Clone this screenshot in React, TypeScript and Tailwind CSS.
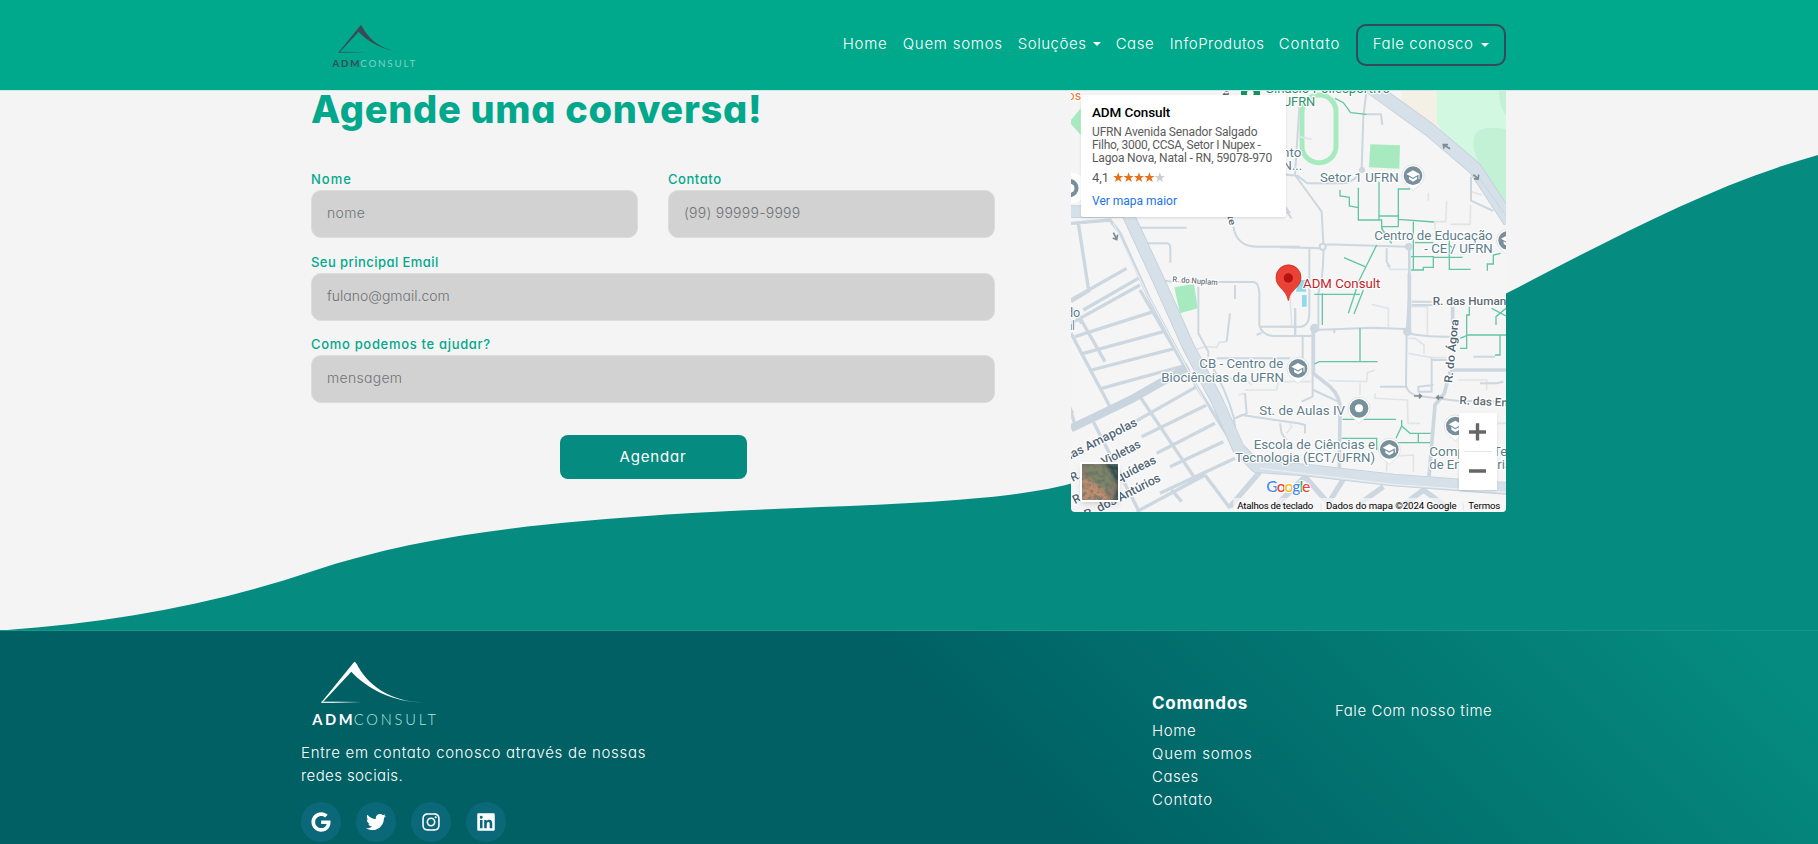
import React from "react";
import { FaGoogle, FaTwitter, FaInstagram, FaLinkedin } from "react-icons/fa";

function Logo({ className, strong, soft, id }: { className: string; strong: string; soft: string; id: string }) {
  return (
    <svg viewBox="90 90 380 200" className={className} aria-label="ADM Consult">
      <defs>
        <linearGradient id={id} gradientUnits="userSpaceOnUse" x1="124" x2="245" y1="0" y2="0">
          <stop offset="0.3" stopColor={strong} />
          <stop offset="1" stopColor={strong} stopOpacity="0" />
        </linearGradient>
        <linearGradient id={id + "t"} gradientUnits="userSpaceOnUse" x1="360" x2="435" y1="0" y2="0">
          <stop offset="0" stopColor={strong} />
          <stop offset="1" stopColor={strong} stopOpacity="0.1" />
        </linearGradient>
      </defs>
      <path d="M123 218L220 99Q225 92 230 102C262 162 325 216 434 217C340 218 258 174 214 125L132 213Z" fill={`url(#${id}t)`} />
      <rect x="124" y="215" width="120" height="3.5" fill={`url(#${id})`} />
      <text x="97" y="285" fontSize="44" fontWeight="700" fill={strong} textLength="121" fontFamily="Lato, sans-serif">ADM</text>
      <text x="221" y="285" fontSize="44" fill={soft} textLength="247" fontFamily="Lato, sans-serif">CONSULT</text>
    </svg>
  );
}

function Caret() {
  return <span className="block h-0 w-0 border-x-4 border-t-4 border-x-transparent border-t-white" />;
}

function Pin({ x, y, dot }: { x: number; y: number; dot?: boolean }) {
  return (
    <g transform={`translate(${x} ${y})`}>
      <path d="M0 46C-8 34 -33 25 -33 0A33 33 0 0 1 33 0C33 25 8 34 0 46Z" fill="#fff" stroke="#d5dade" strokeWidth="2" />
      <circle r="28" fill="#78909c" />
      {dot ? (
        <circle r="12" fill="#fff" />
      ) : (
        <g>
          <path d="M-20 -5L0 -16L20 -5L0 6Z" fill="#fff" />
          <path d="M-12 3V11L0 18L12 11V3L0 10Z" fill="#fff" />
          <path d="M18 -5V10" stroke="#fff" strokeWidth="3" />
        </g>
      )}
    </g>
  );
}

type LabelProps = { x: number; y: number; w: number; children: string; size?: number; fill?: string; weight?: number; rotate?: number };

function MapLabel({ x, y, w, children, size = 40, fill = "#607d8b", weight = 400, rotate = 0 }: LabelProps) {
  return (
    <text
      transform={`translate(${x} ${y}) rotate(${rotate})`}
      fontSize={size}
      fontWeight={weight}
      fill={fill}
      stroke="#fff"
      strokeWidth="7"
      strokeLinejoin="round"
      paintOrder="stroke"
      textLength={w}
      lengthAdjust="spacingAndGlyphs"
      fontFamily="Roboto, sans-serif"
    >
      {children}
    </text>
  );
}

function MapDrawing() {
  return (
    <svg viewBox="33 33 1305 1263" className="block h-[421px] w-[435px]" fill="none">
      <rect x="33" y="30" width="1305" height="1266" fill="#f5f5f5" />
      <path d="M33 120L62 85V165L33 132Z" fill="#a8eac0" />
      <g transform="translate(660 0)">
        <path d="M365 30H475V170L365 80Z" fill="#f5f0e5" />
        <path d="M470 30H678V385L590 260L490 165L470 125Z" fill="#d3f8e2" />
        <path d="M655 30H678V105Q655 80 658 30Z" fill="#c3f1d5" />
        <path d="M678 148Q610 135 587 160Q572 190 590 235L678 370Z" fill="#c3f1d5" />
        <rect x="66" y="45" width="102" height="203" rx="50" stroke="#a8eac0" strokeWidth="15" />
        <path d="M271 193L360 196L358 266L267 262Z" fill="#a8eac0" />
        <path d="M55 600H78V635H48ZM66 645H80V680H66Z" fill="#90daee" />
      </g>
      <path d="M343 622L402 612L413 685L360 700Z" fill="#a8eac0" />

      <g stroke="#e1e4e6" strokeWidth="5">
        <path transform="translate(660 0)" d="M55 170L95 178M445 338V362M500 362L497 425H465V455M575 335L605 345M572 375L570 433H512M322 555L330 568H388M0 562H45L50 570V590" />
        <path transform="translate(660 630)" d="M30 20L35 105M275 43L325 55V112M385 50H442V138M385 145H405L432 165V192M385 190L455 203H498M145 272L260 275L262 248L285 240M240 280V315M285 310V325L382 330L384 400H420M320 545V500L400 495V545M0 275H95M535 270H620V300M655 30H678M600 400H678" />
        <path transform="translate(0 630)" d="M405 180L435 170L470 172L478 157L500 155M505 265H555L575 285M555 300H650L655 275M535 315L555 310M690 400L695 410L680 430" />
      </g>

      <g stroke="#ccd7e0" strokeWidth="6" strokeLinejoin="round">
        <path d="M215 443H380M240 490H320Q331 490 331 505V548M520 440Q530 500 590 500H720M300 600L340 606H580Q597 608 598 640V735Q605 765 640 768H745M415 620V760L445 815V830M525 615V657M510 700L500 785M690 400L668 370" />
        <path d="M600 740H710M706 685V765M470 835H690M590 765L605 758" />
        <g transform="translate(660 0)">
          <path d="M60 50L45 285L125 395L130 490Q132 590 115 640V740M45 285Q10 290 -30 260M50 285L82 310H190Q230 305 245 265L250 110L260 30M260 103H303L307 135M88 505V690Q90 740 60 740H0M0 502L125 505M130 493L388 500M320 505V545L330 562M573 290V362L640 393M20 395L35 415" />
          <path d="M388 490V590" strokeWidth="8" />
        </g>
        <g transform="translate(660 630)">
          <path d="M388 0L380 125L378 285Q380 310 415 318L530 332L678 335M100 120L280 113L375 117M385 130Q430 142 535 140M395 45H480M395 35H455M45 55V135M0 138H95M68 140V220M98 110V320L65 335M100 300L175 335M163 120V130M300 290H378M455 205V305H415V290L460 285M458 210H500M580 200H645M600 280H650L670 275" />
          <path d="M388 -50V120M100 110V250L150 290Q182 320 180 360L178 545M518 50V110M510 245L493 310L465 345L447 560M510 240H678" strokeWidth="11" />
        </g>
        <path transform="translate(0 630)" d="M442 205Q500 300 522 385L525 415M525 385L545 375L715 400L735 405V430M555 310L560 370L525 385M660 400L665 430L680 450M40 370L20 330" />
      </g>
      <g fill="#ccd7e0">
        <circle cx="788" cy="500" r="12" />
        <circle cx="764" cy="745" r="14" />
        <circle cx="1042" cy="755" r="13" />
        <circle cx="1046" cy="500" r="11" />
        <circle cx="906" cy="270" r="9" />
      </g>
      <circle cx="788" cy="500" r="6" fill="#f5f5f5" />

      <g stroke="#ccd7e0" strokeWidth="10">
        <path d="M33 430L150 420L180 460L270 660L410 920M55 430L85 625M33 660L200 565M70 690L235 595" />
        <g transform="translate(0 630)">
          <path d="M240 0L380 240M33 100L240 -15M33 35L90 0M45 140L280 65M70 190L310 125M95 240L345 175M125 295L380 225M33 130L150 350M55 75L135 215M33 50L65 100M33 365L45 405" />
          <path d="M240 320L405 565M100 395L240 670M225 395L410 290M245 440L440 345M290 490L465 400M330 530L490 455M300 610L525 505M435 555L510 655M335 600L365 635M230 665L435 555M410 290L530 480" />
        </g>
        <g transform="translate(660 630)">
          <path d="M-150 650L-60 545M-15 650L75 560L145 640L195 560M240 640L310 590M370 645L430 600L500 650" strokeWidth="16" />
        </g>
      </g>
      <g strokeLinejoin="round">
        <path d="M33 1045L220 955L385 860" stroke="#c8d4de" strokeWidth="24" />
        <path d="M33 395H200L300 610L385 800L470 960L535 1105L590 1160L735 1170L1000 1200L1340 1225" stroke="#c4d0da" strokeWidth="38" />
        <path d="M33 395H200L300 610L385 800L470 960L535 1105L590 1160L735 1170L1000 1200L1340 1225" stroke="#d6e0e8" strokeWidth="33" />
        <path d="M160 430L260 640L400 900L510 1110" stroke="#f0f3f5" strokeWidth="3" />
        <path d="M600 1165L1000 1213L1340 1237" stroke="#eef1f4" strokeWidth="3" />
        <path d="M930 20L1110 150L1245 265L1350 425" stroke="#c4d0da" strokeWidth="42" />
        <path d="M930 20L1110 150L1245 265L1350 425" stroke="#d6e0e8" strokeWidth="37" />
        <path d="M1255 290L1340 410" stroke="#c4ced6" strokeWidth="2" />
      </g>

      <g stroke="#63c5a4" strokeWidth="4">
        <path transform="translate(660 0)" d="M165 55L190 68L212 98L260 103M180 330V348L208 352V378L235 383M235 323V420H305V445L335 490M297 305V418M297 408H355M355 440V327H390M355 418L462 426M305 440H355M400 425V570M393 570H430V562H460V530H393M460 488H405M508 480V568H572M460 532H548M290 495L238 600L205 700M192 533L255 560M250 630L222 702M127 640V735M103 643H240M305 440L312 470M622 572V552H640V525L662 520M500 490L520 505" />
        <path transform="translate(660 630)" d="M240 115V213M103 222L118 215H293M568 50V75H560V175H540M540 145L565 135H678M660 135V195H645M648 105V80L678 55M635 55L678 78M188 388H348M365 390V408L348 445M365 408L390 430H452M415 430V458M345 458H450M185 445H290V480" />
      </g>

      <g stroke="#7d8b94" strokeWidth="5">
        <path d="M160 458L170 477M173 464L170 479L158 474M1150 194L1170 206M1152 206L1150 194L1164 194M1240 284L1254 296M1256 284L1254 298L1242 296M1062 948H1082M1077 942L1084 948L1077 955M1130 953H1150M1137 946L1130 952L1137 959" />
      </g>

      <circle cx="33" cy="324" r="46" fill="#fff" />
      <path d="M33 297A28 28 0 0 1 33 352V338A14 14 0 0 0 33 311Z" fill="#78909c" />
      <rect x="543" y="20" width="57" height="27" fill="#15935f" />
      <circle cx="571" cy="40" r="10" fill="#fff" />

      <MapLabel x={2} y={60} w={61} fill="#e8772e">dos</MapLabel>
      <MapLabel x={615} y={38} w={375} fill="#2f8f6b">Ginásio Poliesportivo</MapLabel>
      <MapLabel x={668} y={78} w={98} fill="#2f8f6b">UFRN</MapLabel>
      <MapLabel x={610} y={230} w={114}>mento</MapLabel>
      <MapLabel x={645} y={270} w={81}>RN...</MapLabel>
      <MapLabel x={780} y={306} w={236}>Setor 1 UFRN</MapLabel>
      <MapLabel x={943} y={480} w={355}>Centro de Educação</MapLabel>
      <MapLabel x={1093} y={520} w={205}>- CE / UFRN</MapLabel>
      <MapLabel x={337} y={606} w={136} size={24} weight={500} fill="#6b7780" rotate={4}>R. do Nuplam</MapLabel>
      <MapLabel x={507} y={48} w={30} size={28} weight={500} fill="#5d6970" rotate={-90}>te</MapLabel>
      <MapLabel x={502} y={408} w={30} size={28} weight={500} fill="#5d6970" rotate={76}>te</MapLabel>
      <MapLabel x={1118} y={676} w={250} size={34} weight={500} fill="#5d6970">R. das Humanid</MapLabel>
      <MapLabel x={1176} y={910} w={192} size={34} weight={500} fill="#4f6475" rotate={-84}>R. do Ágora</MapLabel>
      <MapLabel x={1198} y={972} w={175} size={34} weight={500} fill="#5d6970" rotate={3}>R. das Eng.</MapLabel>
      <MapLabel x={418} y={865} w={252}>CB - Centro de</MapLabel>
      <MapLabel x={304} y={905} w={368}>Biociências da UFRN</MapLabel>
      <MapLabel x={598} y={1005} w={257}>St. de Aulas IV</MapLabel>
      <MapLabel x={581} y={1107} w={364}>Escola de Ciências e</MapLabel>
      <MapLabel x={525} y={1147} w={420}>Tecnologia (ECT/UFRN)</MapLabel>
      <MapLabel x={1108} y={1127} w={255}>Complexo Tec</MapLabel>
      <MapLabel x={1108} y={1167} w={248}>de Engenharia</MapLabel>
      <MapLabel x={18} y={710} w={43}>do</MapLabel>
      <MapLabel x={20} y={750} w={24}>al</MapLabel>
      <MapLabel x={20} y={1144} w={240} size={37} weight={500} fill="#4f6475" rotate={-27}>das Amapolas</MapLabel>
      <MapLabel x={38} y={1206} w={232} size={37} weight={500} fill="#4f6475" rotate={-27}>R. das Violetas</MapLabel>
      <MapLabel x={45} y={1273} w={276} size={37} weight={500} fill="#4f6475" rotate={-27}>R. das Orquídeas</MapLabel>
      <MapLabel x={80} y={1316} w={252} size={37} weight={500} fill="#4f6475" rotate={-27}>R. dos Antúrios</MapLabel>

      <Pin x={1059} y={287} />
      <Pin x={1343} y={481} />
      <Pin x={714} y={865} />
      <Pin x={897} y={985} dot />
      <Pin x={988} y={1108} />
      <Pin x={1186} y={1038} />
      <path d="M685 662C678 625 648 625 648 592A37.500 37.500 0 0 1 723 592C723 625 692 625 685 662Z" fill="#ea4335" stroke="#c5221f" strokeWidth="2" />
      <circle cx="685" cy="594" r="14" fill="#b31412" />
      <MapLabel x={729} y={625} w={232} fill="#c5221f">ADM Consult</MapLabel>

      <rect x="520" y="1254" width="818" height="42" fill="#f5f5f5" fillOpacity="0.75" />
      <text x="619" y="1236" fontSize="47" fontWeight="500" textLength="132" fontFamily="Lato, sans-serif" stroke="#fff" strokeWidth="6" paintOrder="stroke">
        <tspan fill="#4285f4">G</tspan>
        <tspan fill="#ea4335">o</tspan>
        <tspan fill="#fbbc04">o</tspan>
        <tspan fill="#4285f4">g</tspan>
        <tspan fill="#34a853">l</tspan>
        <tspan fill="#ea4335">e</tspan>
      </text>
      <g fill="#000" fontSize="29" fontFamily="Roboto, sans-serif">
        <text x="532" y="1286" textLength="228">Atalhos de teclado</text>
        <text x="798" y="1286" textLength="392">Dados do mapa ©2024 Google</text>
        <text x="1225" y="1286" textLength="96">Termos</text>
      </g>
      <path d="M783 1270V1292M1210 1270V1292" stroke="#dcdfe1" strokeWidth="2" />
    </svg>
  );
}

function SatelliteThumb() {
  return (
    <div className="absolute bottom-[10px] left-[9px] h-10 w-10 rounded-xs border-2 border-white shadow-md">
      <svg viewBox="0 0 36 36" className="block h-9 w-9">
        <defs>
          <filter id="terrain" x="0" y="0" width="1" height="1">
            <feTurbulence type="fractalNoise" baseFrequency="0.25" numOctaves="4" seed="5" />
            <feColorMatrix values="0 0 0 0 0.12  0 0 0 0 0.16  0 0 0 0 0.14  4 0 0 0 -1.7" />
          </filter>
          <filter id="smooth">
            <feGaussianBlur stdDeviation="1.5" />
          </filter>
        </defs>
        <rect width="36" height="36" fill="#8d7c69" />
        <g filter="url(#smooth)">
          <path d="M0 14L12 17L22 26L26 36H0Z" fill="#c08e70" />
          <path d="M3 0H20L33 14L27 26L15 22L6 11Z" fill="#7d8468" />
          <path d="M22 0H38V38H31L36 22L28 7Z" fill="#2b4a48" />
        </g>
        <rect width="36" height="36" filter="url(#terrain)" opacity="0.6" />
      </svg>
    </div>
  );
}

function MapCard() {
  return (
    <div className="relative h-[421px] w-[435px] overflow-hidden rounded-b font-['Roboto',sans-serif]">
      <MapDrawing />
      <div className="absolute top-[4px] left-[10px] h-[122px] w-[205px] rounded-xs bg-white pt-[9px] pl-[11px] whitespace-nowrap shadow">
        <p className="text-[13.500px] leading-[16px] font-medium tracking-[-0.100px] text-black">ADM Consult</p>
        <div className="mt-[5.500px] text-xs leading-[13.300px] text-[#5b5b5b]">
          <p className="tracking-[-0.150px]">UFRN Avenida Senador Salgado</p>
          <p className="tracking-[-0.260px]">Filho, 3000, CCSA, Setor I Nupex -</p>
          <p className="tracking-[-0.160px]">Lagoa Nova, Natal - RN, 59078-970</p>
        </div>
        <div className="mt-[4px] flex h-4 items-center text-[13px] text-[#5b5b5b]">
          <span className="w-[21px]">4,1</span>
          <svg viewBox="0 0 52 11" className="h-[11px] w-[52px]">
            {[0, 1, 2, 3, 4].map((n) => (
              <path
                key={n}
                transform={`translate(${n * 10.4} 0)`}
                d="M5.200 0.300L6.500 4H10.300L7.300 6.300L8.400 10L5.200 7.800L2 10L3.100 6.300L0.100 4H3.900Z"
                fill={n < 4 ? "#e7711b" : "#ccc"}
              />
            ))}
          </svg>
        </div>
        <a className="mt-[8px] block text-xs leading-4 text-[#1a73e8]">Ver mapa maior</a>
      </div>
      <SatelliteThumb />
      <div className="absolute right-[9px] bottom-[22px] flex h-[77px] w-[38px] flex-col items-center bg-white shadow">
        <svg viewBox="0 0 38 77" className="h-[77px] w-[38px]" fill="#666">
          <path d="M10 17.300H27V20.700H10ZM16.800 10.300H20.200V27.500H16.800ZM10 56.300H27V59.700H10Z" />
          <path d="M5 38H33V39H5Z" fill="#e6e6e6" />
        </svg>
      </div>
    </div>
  );
}

function Field({ label, placeholder, labelClass, inputClass }: { label: string; placeholder: string; labelClass: string; inputClass: string }) {
  return (
    <label className="block">
      <span className={`block h-[20px] text-[13px] leading-[19px] font-medium whitespace-nowrap text-[#02a88c] ${labelClass}`}>{label}</span>
      <input
        placeholder={placeholder}
        className={`block h-12 w-full rounded-[10px] border border-[#dcdcdc] bg-[#d2d2d2] px-[15px] pb-[3px] text-[14px] font-light outline-none placeholder:text-[#6f7477] ${inputClass}`}
      />
    </label>
  );
}

export default function App() {
  return (
    <div className="flex h-[844px] w-[1818px] flex-col overflow-hidden bg-[#f4f4f4] font-['Inter',sans-serif] [font-feature-settings:'cv11']">
      <header className="flex h-[90px] shrink-0 items-start bg-[#00a88c] pl-[331px]">
        <Logo id="top" className="mt-[23.500px] h-[44.600px] w-[84.700px]" strong="#3c4a57" soft="#7fd3c4" />
        <nav className="ml-[427px] flex h-[88px] items-center text-[15px] font-light whitespace-nowrap text-white">
          <a className="w-[60px] tracking-[0.750px]">Home</a>
          <a className="w-[115px] tracking-[0.750px]">Quem somos</a>
          <a className="flex w-[98px] items-center">
            <span className="w-[75px] tracking-[0.550px]">Soluções</span>
            <Caret />
          </a>
          <a className="w-[54px] tracking-[0.500px]">Case</a>
          <a className="w-[109px] tracking-[0.500px]">InfoProdutos</a>
          <a className="w-[77px] tracking-[0.900px]">Contato</a>
          <button className="mt-px flex h-[42px] w-[150px] items-center rounded-[10px] border-2 border-[#35495a] pl-[15px]">
            <span className="w-[108px] text-left tracking-[0.600px]">Fale conosco</span>
            <Caret />
          </button>
        </nav>
      </header>

      <main className="relative h-[540px] shrink-0 overflow-hidden border-t border-[#cfe9e3]">
        <svg viewBox="0 91 1818 540" className="absolute inset-0 h-[540px] w-[1818px]">
          <path
            d="M0 630.500C110 623 212 605 313 571C420 535 540 523 667 514.500C785 507 890 506.500 985 497.500C1040 492 1070 486 1110 471C1250 425 1380 352 1506 293.500C1610 240 1710 185 1818 155V640H0Z"
            fill="#058b7f"
          />
        </svg>
        <div className="relative flex gap-[76px] pl-[311px]">
          <form className="w-[684px]">
            <h1 className="h-[79px] text-[38px] leading-[37px] font-extrabold tracking-[0.700px] whitespace-nowrap text-[#02a88c]">Agende uma conversa!</h1>
            <div className="flex flex-col gap-[14.700px]">
              <div className="grid grid-cols-2 gap-[30px]">
                <Field label="Nome" placeholder="nome" labelClass="tracking-[1px]" inputClass="tracking-[0.300px]" />
                <Field label="Contato" placeholder="(99) 99999-9999" labelClass="tracking-[0.550px]" inputClass="tracking-[0.250px]" />
              </div>
              <Field label="Seu principal Email" placeholder="fulano@gmail.com" labelClass="tracking-[0.450px]" inputClass="" />
              <Field label="Como podemos te ajudar?" placeholder="mensagem" labelClass="tracking-[0.680px]" inputClass="tracking-[0.300px]" />
            </div>
            <button type="button" className="mx-auto mt-8 block h-11 w-[187px] rounded-lg bg-[#058b7f] text-[15px] tracking-[0.800px] text-white">
              Agendar
            </button>
          </form>
          <MapCard />
        </div>
      </main>

      <footer className="flex h-[214px] shrink-0 items-start overflow-hidden border-t border-[#1a9588] bg-[linear-gradient(45deg,#006064_53%,#058b7f_96%)] pl-[301px] text-[15px] leading-[23px] font-light text-white">
        <div className="w-[851px]">
          <Logo id="bottom" className="mt-[29px] ml-[9px] h-[66.700px] w-[126.700px]" strong="#ffffff" soft="#b5e6e2" />
          <p className="mt-[14.500px] w-[400px] tracking-[0.700px]">
            Entre em contato conosco através de nossas
            <br />
            <span className="tracking-[0.400px]">redes sociais.</span>
          </p>
          <div className="mt-[15px] flex gap-[15px] text-[20px]">
            {[FaGoogle, FaTwitter, FaInstagram, FaLinkedin].map((Icon, n) => (
              <span key={n} className="flex h-10 w-10 items-center justify-center rounded-full bg-[#0a6879]">
                <Icon />
              </span>
            ))}
          </div>
        </div>
        <div className="mt-[60px] w-[183px]">
          <h2 className="h-[28px] text-[17px] leading-[25px] font-bold tracking-[0.700px]">Comandos</h2>
          <ul>
            <li className="tracking-[0.600px]">Home</li>
            <li className="tracking-[0.800px]">Quem somos</li>
            <li className="tracking-[0.500px]">Cases</li>
            <li className="tracking-[0.800px]">Contato</li>
          </ul>
        </div>
        <p className="mt-[68px] tracking-[0.550px] whitespace-nowrap">Fale Com nosso time</p>
      </footer>
    </div>
  );
}
